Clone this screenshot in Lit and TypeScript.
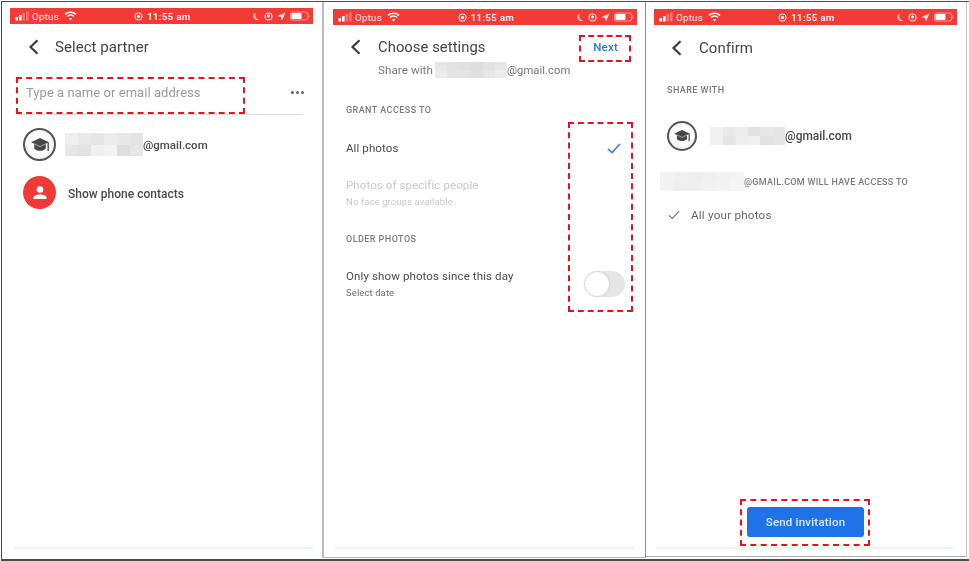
import { LitElement, html, css, svg } from "lit";
import { customElement } from "lit/decorators.js";

const redact = (shades: string[][]) => html`<span class="redact">
  ${shades.map((r) => html`<span class="redact-row">${r.map((c) => html`<i style="background:${c}"></i>`)}</span>`)}
</span>`;

const shadesA = [
  ["#efefef", "#e9e9e9", "#e6e6e6", "#ececec", "#e8e8e8", "#e4e4e4"],
  ["#e6e6e6", "#e3e3e3", "#efefef", "#f3f3f3", "#dedede", "#e6e6e6"],
];
const shadesB = [
  ["#e6e6e6", "#e2e2e2", "#e0e0e0", "#dddddd", "#e2e2e2", "#e6e6e6"],
  ["#ececec", "#e5e5e5", "#e4e4e4", "#e0e0e0", "#e6e6e6", "#ececec"],
];
const shadesC = [
  ["#f0f0f0", "#e9e9e9", "#ececec", "#e2e2e2", "#e8e8e8", "#e6e6e6"],
  ["#f0f0f0", "#e5e5e5", "#eeeeee", "#f0f0f0", "#e2e2e2", "#e6e6e6"],
];
const shadesD = [
  ["#f3f3f3", "#f0f0f0", "#eeeeee", "#f0f0f0", "#f2f2f2", "#f4f4f4"],
  ["#f3f3f3", "#eeeeee", "#efefef", "#f2f2f2", "#f3f3f3", "#f6f6f6"],
];

const statusBar = () => html`<div class="status">
  <div class="st-left">
    <svg width="16" height="10" viewBox="0 0 16 10">
      <rect x="0.5" y="6" width="2.6" height="3.5" fill="#fff" />
      <rect x="4" y="4" width="2.6" height="5.5" fill="#fff" />
      <rect x="7.5" y="2" width="2.6" height="7.5" fill="#fff" opacity=".3" />
      <rect x="11" y="0.5" width="2.6" height="9" fill="#fff" opacity=".3" />
    </svg>
    <span class="carrier">Optus</span>
    <svg class="wifi" width="13" height="10" viewBox="0 0 13 10" fill="none" stroke="#fff" stroke-width="1.5">
      <path d="M1 3.4C4.2.6 8.8.6 12 3.4" />
      <path d="M3 5.5c2-1.7 5-1.7 7 0" />
      <path d="M6.5 9.6 4.8 7.6c1-.8 2.4-.8 3.4 0z" fill="#fff" stroke="none" />
    </svg>
  </div>
  <div class="st-mid">
    <svg width="9" height="9" viewBox="0 0 9 9" fill="none">
      <circle cx="4.5" cy="4.5" r="3.6" stroke="#fff" stroke-width="1" />
      <circle cx="4.5" cy="4.5" r="1.6" fill="#fff" />
    </svg>
    <span>11:55 am</span>
  </div>
  <div class="st-right">
    <svg width="8" height="9" viewBox="0 0 8 9"><path d="M3.6.6C1.4 1.6.6 4 1.6 6c1 1.9 3.5 2.6 5.6 1.5C4.6 7.5 2.7 4.5 3.6.6z" fill="#ffb0ac" /></svg>
    <svg width="9" height="9" viewBox="0 0 9 9" fill="none">
      <circle cx="4.5" cy="4.5" r="3.5" stroke="#ffd9d7" stroke-width="1.1" />
      <circle cx="4.5" cy="4" r="1.5" fill="#fff" />
    </svg>
    <svg width="9" height="9" viewBox="0 0 9 9"><path d="M8.5.5 .5 4l3.5 1 1 3.5z" fill="#ffdedc" /></svg>
    <svg width="20" height="10" viewBox="0 0 20 10">
      <rect x=".5" y="1" width="17" height="8" rx="2" fill="none" stroke="#ff9d98" stroke-width="1" />
      <rect x="1.5" y="2" width="10" height="6" rx="1" fill="#fff" />
      <rect x="18.3" y="3.5" width="1" height="3" fill="#ff9d98" />
    </svg>
  </div>
</div>`;

const chevron = () => html`<svg class="chev" width="11" height="16" viewBox="0 0 11 16" fill="none">
  <path d="M9.5 1.2 2.5 8l7 6.8" stroke="#3c3c3c" stroke-width="2.2" />
</svg>`;

const cap = (big: boolean) => html`<span class="avatar ${big ? "av-big" : "av-small"}">
  <svg viewBox="0 0 20 16" width="${big ? 20 : 18}" height="${big ? 16 : 14}">
    <path d="M10 1 1 5.3l3.2 1.5v4.6C5.6 13 7.8 13.8 10 13.8s4.4-.8 5.8-2.4V6.8L19 5.3z" fill="#464646" />
    <path d="M4.2 6.8 10 9.6l5.8-2.8" fill="none" stroke="#ddd" stroke-width=".7" />
    <path d="M18.2 5.5v8.5" stroke="#464646" stroke-width="1.3" />
  </svg>
</span>`;

const checkMark = (color: string, w: number, h: number, sw: number) => html`<svg width="${w}" height="${h}" viewBox="0 0 14 11" fill="none">
  ${svg`<path d="M1 5.8 5 9.6 13 1" stroke="${color}" stroke-width="${sw}" />`}
</svg>`;

@customElement("app-root")
export class AppRoot extends LitElement {
  static styles = css`
    :host { display: block; width: 969px; height: 561px; background: #fff; font-family: Roboto, "Liberation Sans", sans-serif; }
    * { box-sizing: border-box; }
    .frame {
      position: relative; width: 969px; height: 561px; display: grid; grid-template-columns: 322px 322px 321px;
      align-items: start; padding: 2px 0 0 2px; background: #fff;
    }
    .edge-top { position: absolute; left: 1px; right: 0; top: 1px; height: 1px; background: #4a4a4a; }
    .edge-left { position: absolute; left: 1px; top: 1px; bottom: 1px; width: 1px; background: #4a4a4a; }
    .edge-bottom { position: absolute; left: 1px; right: 0; bottom: 0; height: 2px; background: #4a4a4a; }
    .panel { display: flex; flex-direction: column; height: 556px; color: #444; }
    .p1 { border-right: 2px solid #bdbdbd; }
    .p2 { border-right: 1px solid #8f8f8f; border-bottom: 1px solid #b5b5b5; }
    .p3 { height: 555px; border-right: 1px solid #c8c8c8; border-bottom: 1px solid #a8a8a8; }
    .soft { filter: blur(0.35px); display: flex; flex-direction: column; flex: 1; }

    .status { height: 16px; background: #f23a36; color: #fff; display: grid; grid-template-columns: 1fr auto 1fr; align-items: center; margin: 6px 9px 0 8px; padding: 0 3px 0 5px; font-size: 9.8px; }
    .p2 .status { margin: 7px 8px 0 9px; }
    .p3 .status { margin: 7px 9px 0 8px; }
    .st-left { display: flex; align-items: center; }
    .carrier { margin-left: 1px; letter-spacing: .2px; color: #ffe3e1; }
    .wifi { margin-left: 5px; }
    .st-mid { display: flex; align-items: center; gap: 4px; font-size: 9.5px; font-weight: 500; letter-spacing: .45px; }
    .st-right { display: flex; align-items: center; justify-content: flex-end; gap: 4px; }

    .header { height: 30px; display: flex; align-items: center; font-size: 15px; margin-top: 8px; letter-spacing: .05px; color: #454545; flex: none; }
    .chev { flex: none; }
    .p1 .header { padding-left: 26px; gap: 16px; }
    .p2 .header { padding-left: 26px; gap: 17px; margin-top: 7px; font-size: 14.8px; }
    .p3 .header { padding-left: 25px; gap: 17px; margin-top: 8px; }
    .p2 .next { margin-left: auto; margin-right: 27px; color: #2a78e4; font-size: 11.5px; font-weight: 500; letter-spacing: .2px; }

    .search { margin: 9px 20px 0 14px; height: 44px; padding: 0 0 0 10px; border-bottom: 1px solid #dedede; display: flex; align-items: center; justify-content: space-between; color: #9a9a9a; font-size: 13px; flex: none; letter-spacing: .05px; }
    .dots { display: flex; gap: 2px; margin-right: -2px; }
    .dots i { width: 3px; height: 3px; border-radius: 50%; background: #666; }

    .contact { display: flex; align-items: center; margin: 13px 0 0 21px; height: 33px; font-size: 11.5px; flex: none; color: #4a4a4a; font-weight: 500; }
    .contact-2 { margin-top: 15px; font-size: 12px; letter-spacing: .02px; }
    .contact .redact { margin-left: 9px; width: 78px; height: 23px; }
    .contact-2 .label { margin-left: 12px; margin-top: 2px; }

    .avatar { flex: none; display: flex; align-items: center; justify-content: center; border-radius: 50%; background: radial-gradient(circle at 50% 45%, #fafafa 55%, #e2e2e2 100%); border: 2px solid #555; }
    .av-big { width: 33px; height: 33px; }
    .av-small { width: 30px; height: 30px; }
    .red-av { flex: none; width: 33px; height: 33px; border-radius: 50%; background: #ee3b37; display: flex; align-items: center; justify-content: center; }

    .redact { display: inline-flex; flex-direction: column; flex: none; }
    .redact-row { display: flex; flex: 1; }
    .redact-row i { flex: 1; display: block; }

    .spacer { flex: 1; }
    .green { height: 2px; margin: 0 9px 9px 11px; background: #e8fae8; flex: none; }
    .p2 .green { margin: 0 10px 8px 11px; }
    .p3 .green { margin: 0 12px 7px 10px; }

    .share { display: flex; align-items: center; margin: -1px 0 0 54px; height: 18px; font-size: 11.6px; color: #777; flex: none; letter-spacing: .08px; }
    .share .redact { margin-left: 2px; width: 72px; height: 16px; }
    .share .addr { font-size: 11.2px; }

    .sec { font-size: 9px; font-weight: 500; letter-spacing: .45px; color: #7a7a7a; flex: none; height: 12px; line-height: 12px; }
    .p2 .body { padding: 0 12px 0 22px; display: flex; flex-direction: column; flex: none; }
    .p3 .body { padding: 0 0 0 21px; display: flex; flex-direction: column; flex: none; }
    .p2 .sec-1 { margin-top: 25px; }
    .row { display: flex; align-items: center; justify-content: space-between; flex: none; font-size: 11.5px; color: #4d4d4d; letter-spacing: .1px; }
    .row-all { height: 16px; margin-top: 24px; }
    .check { margin-right: 12px; display: flex; }
    .muted { color: #c9c9c9; }
    .line-1 { height: 14px; line-height: 14px; margin-top: 22px; font-size: 11.5px; letter-spacing: .1px; flex: none; }
    .line-2 { height: 12px; line-height: 12px; margin-top: 4px; font-size: 9.5px; letter-spacing: .1px; flex: none; }
    .p2 .sec-2 { margin-top: 25px; }
    .row-day { margin-top: 21px; height: 36px; align-items: center; }
    .day-text { display: flex; flex-direction: column; }
    .day-main { font-size: 11.5px; line-height: 14px; letter-spacing: .12px; }
    .day-sub { font-size: 9.5px; line-height: 12px; margin-top: 4px; color: #6f6f6f; letter-spacing: .1px; }
    .toggle { width: 41px; height: 26px; border-radius: 13px; background: #e6e6e6; display: flex; align-items: center; padding-left: 1px; margin-right: 8px; }
    .knob { width: 24px; height: 24px; border-radius: 50%; background: #fff; box-shadow: 0 0 2px #bbb; }

    .p3 .sec-1 { margin-top: 21px; }
    .c3 { display: flex; align-items: center; margin-top: 25px; height: 30px; font-size: 11.9px; font-weight: 500; color: #484848; flex: none; }
    .c3 .redact { margin-left: 13px; width: 75px; height: 18px; }
    .access { display: flex; align-items: center; margin: 21px 0 0 -7px; height: 19px; flex: none; font-size: 9px; font-weight: 500; letter-spacing: .3px; color: #7a7a7a; }
    .access .redact { width: 84px; height: 19px; }
    .your { display: flex; align-items: center; gap: 11px; margin: 16px 0 0 1px; height: 16px; font-size: 11.7px; color: #666; letter-spacing: .2px; flex: none; }
    .actions { display: flex; justify-content: flex-start; padding-left: 101px; margin-bottom: 10px; flex: none; }
    .send { width: 117px; height: 30px; border: none; border-radius: 3px; background: #1f73e8; color: #d9e8fc; font: 500 11.5px Roboto, sans-serif; letter-spacing: .2px; padding: 0; }

    .mark { position: absolute; border: 2px dashed #e8121c; pointer-events: none; }
    .m-input { left: 16px; top: 77px; width: 229px; height: 37px; }
    .m-next { left: 579px; top: 35px; width: 52px; height: 27px; }
    .m-set { left: 568px; top: 122px; width: 65px; height: 190px; }
    .m-send { left: 740px; top: 499px; width: 130px; height: 47px; }
  `;

  render() {
    return html`<div class="frame">
      <section class="panel p1"><div class="soft">
        ${statusBar()}
        <div class="header">${chevron()}<span>Select partner</span></div>
        <div class="search"><span>Type a name or email address</span><span class="dots"><i></i><i></i><i></i></span></div>
        <div class="contact">${cap(true)}${redact(shadesA)}<span>@gmail.com</span></div>
        <div class="contact contact-2">
          <span class="red-av"><svg width="16" height="16" viewBox="0 0 16 16"><circle cx="8" cy="4.5" r="3.3" fill="#fff" /><path d="M1.5 14v-1.3c0-2 3.5-3.2 6.500-3.200s6.500 1.200 6.500 3.200V14z" fill="#fff" /></svg></span>
          <span class="label">Show phone contacts</span>
        </div>
        <div class="spacer"></div>
        <div class="green"></div>
      </div></section>

      <section class="panel p2"><div class="soft">
        ${statusBar()}
        <div class="header">${chevron()}<span>Choose settings</span><span class="next">Next</span></div>
        <div class="share">Share with${redact(shadesB)}<span class="addr">@gmail.com</span></div>
        <div class="body">
          <div class="sec sec-1">GRANT ACCESS TO</div>
          <div class="row row-all"><span>All photos</span><span class="check">${checkMark("#3a7fe0", 14, 11, 1.6)}</span></div>
          <div class="line-1 muted">Photos of specific people</div>
          <div class="line-2 muted">No face groups available</div>
          <div class="sec sec-2">OLDER PHOTOS</div>
          <div class="row row-day">
            <span class="day-text"><span class="day-main">Only show photos since this day</span><span class="day-sub">Select date</span></span>
            <span class="toggle"><span class="knob"></span></span>
          </div>
        </div>
        <div class="spacer"></div>
        <div class="green"></div>
      </div></section>

      <section class="panel p3"><div class="soft">
        ${statusBar()}
        <div class="header">${chevron()}<span>Confirm</span></div>
        <div class="body">
          <div class="sec sec-1">SHARE WITH</div>
          <div class="c3">${cap(false)}${redact(shadesC)}<span>@gmail.com</span></div>
          <div class="access">${redact(shadesD)}<span>@GMAIL.COM WILL HAVE ACCESS TO</span></div>
          <div class="your">${checkMark("#666", 12, 10, 1.2)}<span>All your photos</span></div>
        </div>
        <div class="spacer"></div>
        <div class="actions"><button class="send">Send invitation</button></div>
        <div class="green"></div>
      </div></section>

      <div class="edge-top"></div><div class="edge-left"></div><div class="edge-bottom"></div>
      <div class="mark m-input"></div>
      <div class="mark m-next"></div>
      <div class="mark m-set"></div>
      <div class="mark m-send"></div>
    </div>`;
  }
}
